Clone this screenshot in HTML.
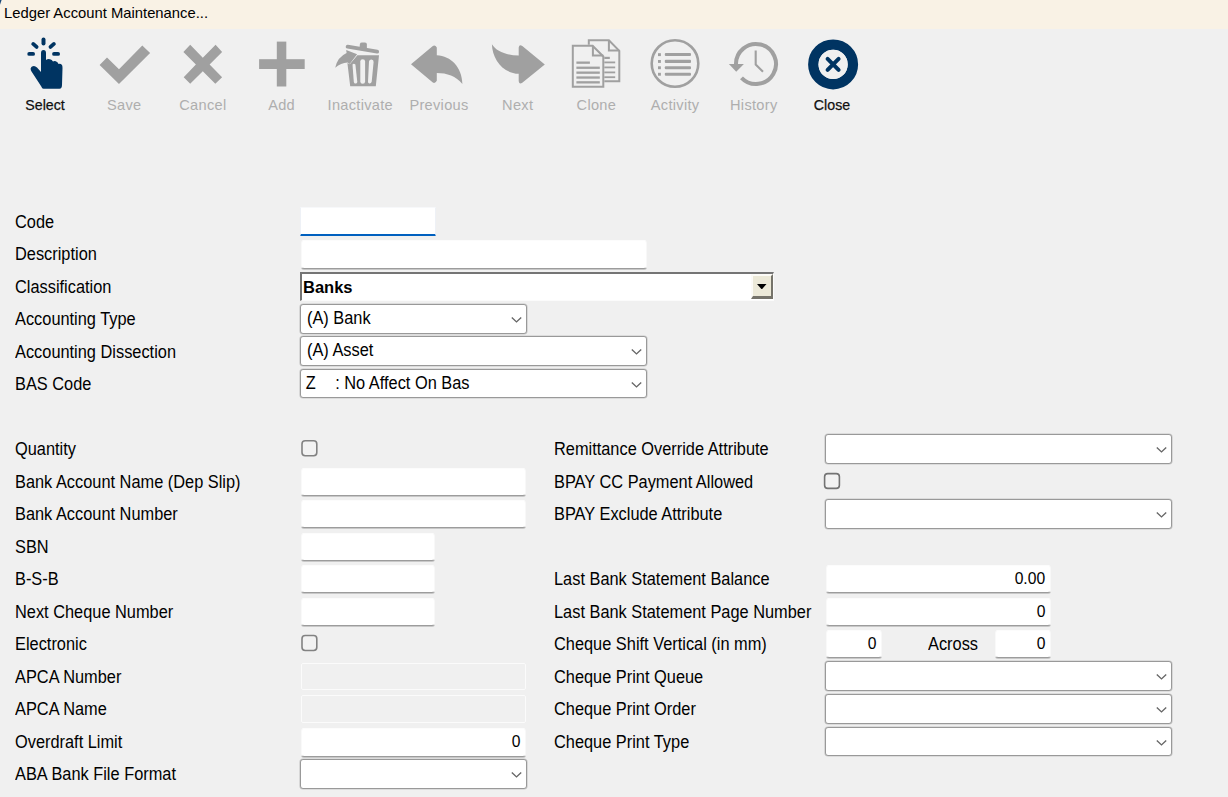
<!DOCTYPE html>
<html><head><meta charset="utf-8">
<style>
html,body{margin:0;padding:0;}
body{width:1228px;height:797px;overflow:hidden;background:#f0f0f0;position:relative;font-family:"Liberation Sans",sans-serif;color:#000;}
#title{position:absolute;left:0;top:0;width:1228px;height:29px;background:#f9f2e5;}
#title span{position:absolute;left:4px;top:4px;font-size:14.8px;line-height:18px;color:#000;white-space:nowrap;}
.tb{position:absolute;top:96px;width:80px;text-align:center;font-size:14.6px;line-height:18px;color:#aeaeae;white-space:nowrap;margin-left:1px;letter-spacing:0.3px;}
.tb.on{color:#111;font-size:14.2px;-webkit-text-stroke:0.25px #111;text-indent:1px;margin-left:0;letter-spacing:0;}
.l{position:absolute;font-size:17.5px;line-height:20px;white-space:nowrap;color:#000;transform:scaleX(0.935);transform-origin:0 0;}
.in{position:absolute;background:#fff;box-sizing:border-box;height:28px;border-radius:3px;border:1px solid #fcfcfc;border-right-color:#f8f8f8;border-left-color:#f9f9f9;border-bottom:1px solid #9c9c9c;box-shadow:0 1px 0 #c8c8c8;}
.dis{position:absolute;background:#f0f0f0;box-sizing:border-box;height:28px;border:1px solid #fbfbfb;border-radius:2px;}
.sel{position:absolute;background:#fff;box-sizing:border-box;height:29px;border:1px solid #999;border-radius:3px;box-shadow:0 0 0 0.6px rgba(150,150,150,0.45);}
.sel .t{position:absolute;left:6px;top:2.5px;font-size:17.5px;line-height:20px;white-space:nowrap;transform:scaleX(0.935);transform-origin:0 0;}
.chev{position:absolute;right:4px;top:11px;width:11px;height:7px;}
.num{position:absolute;right:5px;top:2px;font-size:17px;line-height:20px;transform:scaleX(0.92);transform-origin:100% 0;margin-top:0.5px;}
.cb{position:absolute;box-sizing:border-box;width:16.5px;height:16.5px;border:2px solid #8a8a8a;border-radius:3.5px;background:#f3f3f3;}
</style></head><body>
<div id="title"><span>Ledger Account Maintenance...</span></div>
<svg style="position:absolute;left:0;top:0" width="4" height="6"><polygon points="0,0 1.6,0 0,4.8" fill="#1c4a7a"/></svg>

<svg style="position:absolute;left:0;top:0" width="1228" height="100" viewBox="0 0 1228 100">
 <g fill="#003462">
  <!-- hand -->
  <path d="M41,53 Q41,50 43.5,50 Q46,50 46,53 L46,60 Q48,58.5 50,59.3 Q52,59.5 53,61.5 Q55,60.5 57,62 Q58,62.5 58.5,64 Q60.5,63.2 62,65 Q62.5,66 62.5,68 L62,85 Q62,88.7 59.5,88.7 L43.5,88.7 Q42,88.7 41.3,86.5 L31.5,71.5 Q29.5,68 32,66.5 Q34.5,65 37,67.5 L41,72 Z"/>
 </g>
 <g stroke="#003462" stroke-width="3.8" stroke-linecap="round" fill="none">
  <path d="M43.5,39.6 L43.5,43.4" stroke-width="4"/>
  <line x1="33.2" y1="43.9" x2="36.6" y2="46.9"/>
  <line x1="53.9" y1="43.9" x2="50.5" y2="46.9"/>
  <line x1="29.2" y1="53.9" x2="33.1" y2="53.9"/>
  <line x1="54" y1="53.9" x2="58.1" y2="53.9"/>
 </g>
 <g fill="#a0a0a0">
  <!-- save check -->
  <polygon points="99.6,64.9 107,57.6 119,69.2 142.3,45.5 150.1,53 119,84"/>
  <!-- cancel x -->
  <polygon points="183.4,52.1 190.2,44.7 202.8,57.8 215.6,44.7 222.1,51.9 209.6,64.4 222.1,77.2 215.3,83.8 202.8,71.3 190.2,83.8 183.7,77.2 195.9,64.4"/>
  <!-- add plus -->
  <rect x="276.8" y="41.6" width="9.5" height="44.9"/>
  <rect x="259.1" y="59.2" width="45.6" height="9.8"/>
  <!-- previous -->
  <path transform="translate(411,45)" d="M0,19.3 L21.5,1.3 Q24,-0.6 25.8,2.5 L25.8,10.2 C40,11 51,22 51.4,38.9 C45,31 36,27.9 25.8,27.9 L25.8,35.8 Q24,39 21.5,37.3 Z"/>
  <!-- next -->
  <path d="M518.7,55.6 C506,55.2 496,51 491.9,44.2 C492.3,58 502,73.3 518.7,73.8 L518.7,81.2 Q519.3,85 522.3,82.8 L544.8,64.4 L522.3,46 Q519.3,43.8 518.7,47.6 Z"/>
 </g>
 <!-- trash -->
 <g fill="#a0a0a0">
  <line x1="347.6" y1="46.7" x2="377.2" y2="51.7" stroke="#a0a0a0" stroke-width="3.8" stroke-linecap="round"/>
  <path d="M359.6,47.5 L359.9,44 Q360.2,42.6 362,42.6 L365,42.6 Q366.9,42.6 366.9,44.5 L366.9,49 Z"/>
  <path d="M357.4,55.3 L379,55.3 L375.8,86.3 L350.2,86.3 L347.4,62.9 L349.8,64.2 Z"/>
  <path d="M335.2,67.8 Q337.5,57 346.6,53 L346.2,50 L357.1,54.3 L349.7,64.1 L347.5,62.5 Q341,62.8 335.2,67.8 Z"/>
 </g>
 <g fill="#f0f0f0">
  <path d="M352.5,64.5 Q353.8,62.8 355.4,64.6 L357.3,82 Q356.8,84 354.8,83.4 Q353.9,83 353.8,81.8 Z"/>
  <rect x="360.3" y="59.2" width="4.8" height="24.6" rx="2.4"/>
  <path d="M369,61.5 Q369.3,59.4 371.4,59.4 Q373.8,59.6 373.6,62 L371.7,81.8 Q371.2,83.8 369.2,83.6 Q367.8,83.2 368,81.5 Z"/>
 </g>
 <!-- clone -->
 <g fill="none" stroke="#a0a0a0" stroke-width="2">
  <path d="M588.8,44.7 L588.8,40.3 L608.9,40.3 L619.3,50.8 L619.3,81.3 L604.3,81.3"/>
  <path d="M608.9,40.3 L608.9,50.4 L619.3,50.4"/>
  <path d="M572.8,45.7 L592.6,45.7 L603.3,56.5 L603.3,86.7 L572.8,86.7 Z" fill="#f0f0f0"/>
  <path d="M592.9,45.7 L592.9,55.5 L603.3,55.5"/>
 </g>
 <g fill="#a0a0a0">
  <rect x="604.3" y="56.8" width="5.5" height="2.2"/>
  <rect x="604.3" y="61.5" width="10.9" height="1.8"/>
  <rect x="604.3" y="66.5" width="10.9" height="1.8"/>
  <rect x="604.3" y="71.5" width="10.9" height="1.8"/>
  <rect x="604.3" y="76.3" width="10.9" height="1.8"/>
  <rect x="576.4" y="61.5" width="13.5" height="2.3"/>
  <rect x="576.4" y="66.6" width="23.4" height="2.3"/>
  <rect x="576.4" y="71.5" width="23.4" height="2.3"/>
  <rect x="576.4" y="76.4" width="23.4" height="2.3"/>
  <rect x="576.4" y="81.2" width="23.4" height="2.3"/>
 </g>
 <!-- activity -->
 <circle cx="675" cy="63.5" r="23.3" fill="none" stroke="#a0a0a0" stroke-width="2.6"/>
 <g fill="#a0a0a0">
  <rect x="658" y="53.2" width="2.9" height="2.9"/>
  <rect x="658" y="60" width="2.9" height="2.9"/>
  <rect x="658" y="66.3" width="2.9" height="2.9"/>
  <rect x="658" y="72.8" width="2.9" height="2.9"/>
  <rect x="664.8" y="53" width="26.2" height="3.1" rx="1"/>
  <rect x="664.8" y="59.8" width="26.2" height="3.1" rx="1"/>
  <rect x="664.8" y="66.2" width="26.2" height="3.1" rx="1"/>
  <rect x="664.8" y="72.7" width="26.2" height="3.1" rx="1"/>
 </g>
 <!-- history -->
 <path d="M736,65 A20,20 0 1 1 741.5,77.8" fill="none" stroke="#a0a0a0" stroke-width="4"/>
 <polygon points="728.9,64.1 743.9,64.1 736.2,71.8" fill="#a0a0a0"/>
 <path d="M755.7,50.4 L755.7,64.5 L763,71.7" fill="none" stroke="#a0a0a0" stroke-width="2.1"/>
 <!-- close -->
 <circle cx="833.1" cy="64.4" r="19.8" fill="none" stroke="#003462" stroke-width="10.4"/>
 <circle cx="833.1" cy="64.4" r="14.6" fill="#f0f0f0"/>
 <path d="M827.6,58.9 L838.6,69.9 M838.6,58.9 L827.6,69.9" stroke="#003462" stroke-width="4" stroke-linecap="round"/>
</svg>

<div class="tb on" style="left:4.5px">Select</div>
<div class="tb" style="left:83.2px">Save</div>
<div class="tb" style="left:161.9px">Cancel</div>
<div class="tb" style="left:240.6px">Add</div>
<div class="tb" style="left:319.3px">Inactivate</div>
<div class="tb" style="left:398px">Previous</div>
<div class="tb" style="left:476.7px">Next</div>
<div class="tb" style="left:555.4px">Clone</div>
<div class="tb" style="left:634.1px">Activity</div>
<div class="tb" style="left:712.8px">History</div>
<div class="tb on" style="left:791.5px">Close</div>

<!-- LABELS LEFT -->
<div class="l" style="left:15px;top:212px">Code</div>
<div class="l" style="left:15px;top:243.5px">Description</div>
<div class="l" style="left:15px;top:277px">Classification</div>
<div class="l" style="left:15px;top:308.5px">Accounting Type</div>
<div class="l" style="left:15px;top:342px">Accounting Dissection</div>
<div class="l" style="left:15px;top:373.5px">BAS Code</div>
<div class="l" style="left:15px;top:438.5px">Quantity</div>
<div class="l" style="left:15px;top:472px">Bank Account Name (Dep Slip)</div>
<div class="l" style="left:15px;top:503.5px">Bank Account Number</div>
<div class="l" style="left:15px;top:537px">SBN</div>
<div class="l" style="left:15px;top:568.5px">B-S-B</div>
<div class="l" style="left:15px;top:602px">Next Cheque Number</div>
<div class="l" style="left:15px;top:633.5px">Electronic</div>
<div class="l" style="left:15px;top:667px">APCA Number</div>
<div class="l" style="left:15px;top:698.5px">APCA Name</div>
<div class="l" style="left:15px;top:732px">Overdraft Limit</div>
<div class="l" style="left:15px;top:763.5px">ABA Bank File Format</div>

<!-- LABELS RIGHT -->
<div class="l" style="left:554px;top:438.5px">Remittance Override Attribute</div>
<div class="l" style="left:554px;top:472px">BPAY CC Payment Allowed</div>
<div class="l" style="left:554px;top:503.5px">BPAY Exclude Attribute</div>
<div class="l" style="left:554px;top:568.5px">Last Bank Statement Balance</div>
<div class="l" style="left:554px;top:602px">Last Bank Statement Page Number</div>
<div class="l" style="left:554px;top:633.5px">Cheque Shift Vertical (in mm)</div>
<div class="l" style="left:554px;top:667px">Cheque Print Queue</div>
<div class="l" style="left:554px;top:698.5px">Cheque Print Order</div>
<div class="l" style="left:554px;top:732px">Cheque Print Type</div>
<div class="l" style="left:928px;top:633.5px">Across</div>

<!-- CONTROLS -->
<div class="in" style="left:300px;top:207px;width:136px;height:29px;border-radius:0 0 1px 1px;border:1px solid #eef1f6;border-top-color:#f7f8fa;border-bottom:2px solid #0060bf;box-shadow:none;"></div>
<div class="in" style="left:301px;top:240px;width:346px;height:29px;"></div>

<div id="cls" style="position:absolute;left:300px;top:272px;width:474px;height:29px;box-sizing:border-box;background:#fff;border-top:2px solid #747474;border-left:2px solid #747474;border-bottom:1px solid #fbfbfb;border-right:1px solid #fbfbfb;">
 <div style="position:absolute;left:1px;top:2.5px;font-size:16.5px;font-weight:bold;line-height:20px">Banks</div>
 <div style="position:absolute;right:0px;top:0px;width:22px;height:25px;box-sizing:border-box;background:#ece9d8;border-top:2px solid #fcfbf7;border-left:2px solid #fcfbf7;border-right:2px solid #75736a;border-bottom:3px solid #75736a;">
  <svg style="position:absolute;left:4px;top:7.5px" width="9.5" height="5.5" viewBox="0 0 9 5"><polygon points="0,0 9,0 4.5,5" fill="#000"/></svg>
 </div>
</div>

<div class="sel" style="left:300px;top:304px;width:227px;height:30px;"><div class="t">(A) Bank</div><svg class="chev" viewBox="0 0 11 7"><path d="M0.8,1.6 L5.5,5.9 L10.2,1.6" fill="none" stroke="#666" stroke-width="1.4"/></svg></div>
<div class="sel" style="left:300px;top:336px;width:347px;height:30px;"><div class="t">(A) Asset</div><svg class="chev" viewBox="0 0 11 7"><path d="M0.8,1.6 L5.5,5.9 L10.2,1.6" fill="none" stroke="#666" stroke-width="1.4"/></svg></div>
<div class="sel" style="left:300px;top:369px;width:347px;"><div class="t"><span style="margin-left:-1.4px">Z</span><span style="margin-left:1.4px">&nbsp;&nbsp;&nbsp;&nbsp;: No Affect On Bas</span></div><svg class="chev" viewBox="0 0 11 7"><path d="M0.8,1.6 L5.5,5.9 L10.2,1.6" fill="none" stroke="#666" stroke-width="1.4"/></svg></div>

<svg style="position:absolute;left:300px;top:439px" width="20" height="20"><rect x="2" y="1.7" width="14.8" height="15" rx="3.2" fill="#f2f2f2" stroke="#828282" stroke-width="1.6"/></svg>
<div class="in" style="left:301px;top:468px;width:225px;"></div>
<div class="in" style="left:301px;top:500px;width:225px;"></div>
<div class="in" style="left:301px;top:533px;width:134px;"></div>
<div class="in" style="left:301px;top:565px;width:134px;"></div>
<div class="in" style="left:301px;top:598px;width:134px;"></div>
<svg style="position:absolute;left:300px;top:634px" width="20" height="20"><rect x="2" y="1.5" width="14.8" height="15" rx="3.2" fill="#f2f2f2" stroke="#828282" stroke-width="1.6"/></svg>
<div class="dis" style="left:301px;top:663px;width:225px;height:27px;"></div>
<div class="dis" style="left:301px;top:695px;width:225px;"></div>
<div class="in" style="left:301px;top:728px;width:225px;height:29px;"><div class="num">0</div></div>
<div class="sel" style="left:300px;top:759px;width:227px;height:30px;"><svg class="chev" viewBox="0 0 11 7"><path d="M0.8,1.6 L5.5,5.9 L10.2,1.6" fill="none" stroke="#666" stroke-width="1.4"/></svg></div>

<div class="sel" style="left:825px;top:434px;width:347px;height:30px;"><svg class="chev" viewBox="0 0 11 7"><path d="M0.8,1.6 L5.5,5.9 L10.2,1.6" fill="none" stroke="#666" stroke-width="1.4"/></svg></div>
<svg style="position:absolute;left:823px;top:472px" width="20" height="20"><rect x="1.6" y="1.6" width="14.8" height="14.8" rx="3.2" fill="#f2f2f2" stroke="#737373" stroke-width="1.6"/></svg>
<div class="sel" style="left:825px;top:499px;width:347px;height:30px;"><svg class="chev" viewBox="0 0 11 7"><path d="M0.8,1.6 L5.5,5.9 L10.2,1.6" fill="none" stroke="#666" stroke-width="1.4"/></svg></div>
<div class="in" style="left:826px;top:565px;width:225px;"><div class="num">0.00</div></div>
<div class="in" style="left:826px;top:598px;width:225px;"><div class="num">0</div></div>
<div class="in" style="left:826px;top:630px;width:56px;"><div class="num">0</div></div>
<div class="in" style="left:995px;top:630px;width:56px;"><div class="num">0</div></div>
<div class="sel" style="left:825px;top:661px;width:347px;height:30px;"><svg class="chev" viewBox="0 0 11 7"><path d="M0.8,1.6 L5.5,5.9 L10.2,1.6" fill="none" stroke="#666" stroke-width="1.4"/></svg></div>
<div class="sel" style="left:825px;top:694px;width:347px;height:30px;"><svg class="chev" viewBox="0 0 11 7"><path d="M0.8,1.6 L5.5,5.9 L10.2,1.6" fill="none" stroke="#666" stroke-width="1.4"/></svg></div>
<div class="sel" style="left:825px;top:727px;width:347px;"><svg class="chev" viewBox="0 0 11 7"><path d="M0.8,1.6 L5.5,5.9 L10.2,1.6" fill="none" stroke="#666" stroke-width="1.4"/></svg></div>

</body></html>
